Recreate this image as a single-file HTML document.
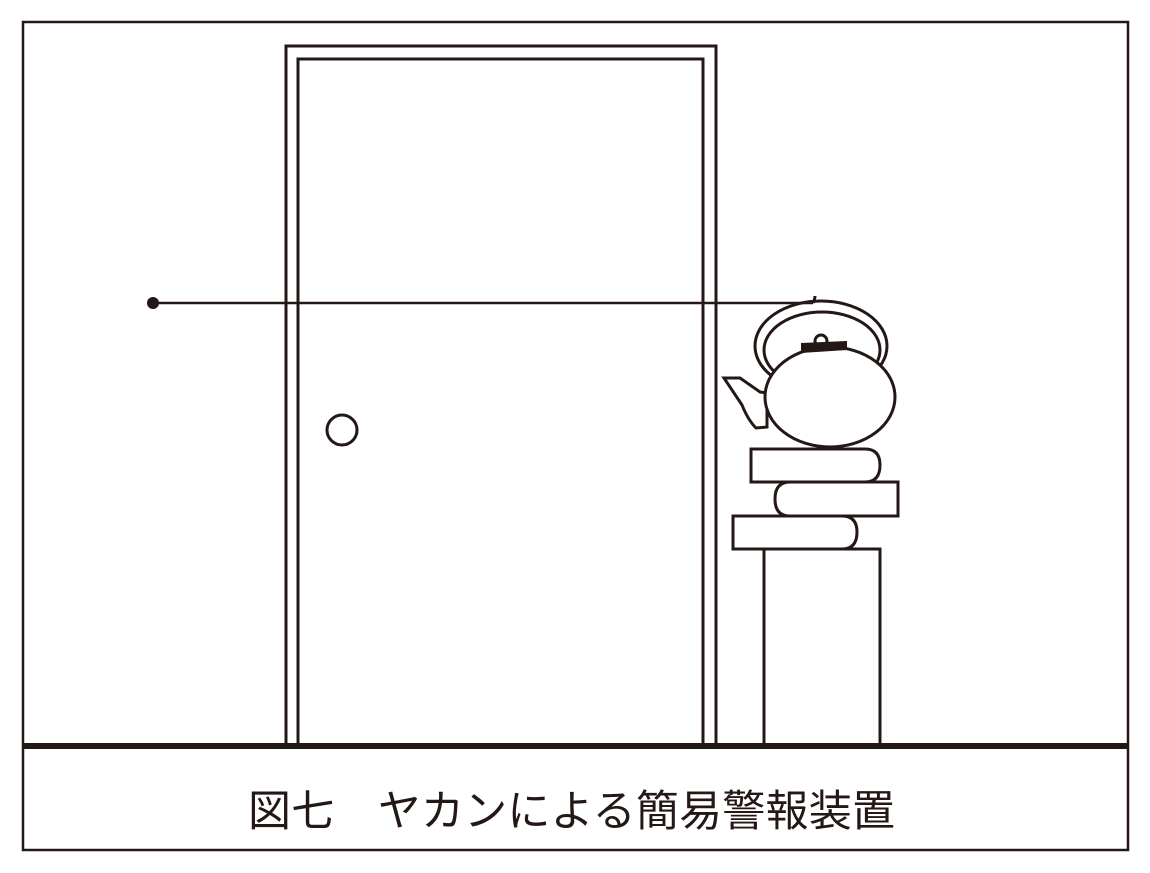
<!DOCTYPE html><html><head><meta charset="utf-8"><style>body{margin:0;background:#fff}svg{display:block}</style></head><body>
<svg width="1150" height="873" viewBox="0 0 1150 873" xmlns="http://www.w3.org/2000/svg">
<rect width="1150" height="873" fill="#fff"/>
<g fill="none" stroke="#231815" stroke-width="3">
<rect x="23" y="22" width="1105" height="828" stroke-width="2.5"/>
<path d="M286 746V46H716V746"/>
<path d="M298 746V59H703V746"/>
<circle cx="342" cy="430" r="15"/>
<path d="M153 303H813" stroke-width="2.5"/>
<path d="M813 303q2-4 2-7"/>
<ellipse cx="821" cy="346" rx="66" ry="45"/>
<ellipse cx="822" cy="350" rx="58" ry="38"/>
<path d="M724 378L740 378L760 392L767 393L767 427L756 428Q748 420 742 405Z" fill="#fff"/>
<ellipse cx="830" cy="397" rx="65" ry="50" fill="#fff"/>
<circle cx="821" cy="341" r="6" fill="#fff"/>
<path d="M751 449H865Q880 449 880 465Q880 482 865 482H751Z" fill="#fff"/>
<path d="M898 482H790Q775 482 775 499Q775 516 790 516H898Z" fill="#fff"/>
<path d="M733 516H842Q857 516 857 532Q857 549 842 549H733Z" fill="#fff"/>
<path d="M764 746V549H880V746"/>
</g>
<path d="M801 343L847 341L847 350L801 353Z" fill="#231815"/>
<circle cx="153" cy="303" r="6" fill="#231815"/>
<rect x="23" y="743" width="1105" height="6" fill="#231815"/>
<text x="248" y="826" font-family="'Liberation Sans','Noto Sans CJK JP',sans-serif" font-size="43" textLength="647" fill="#231815">図七　ヤカンによる簡易警報装置</text>
</svg>
</body></html>
